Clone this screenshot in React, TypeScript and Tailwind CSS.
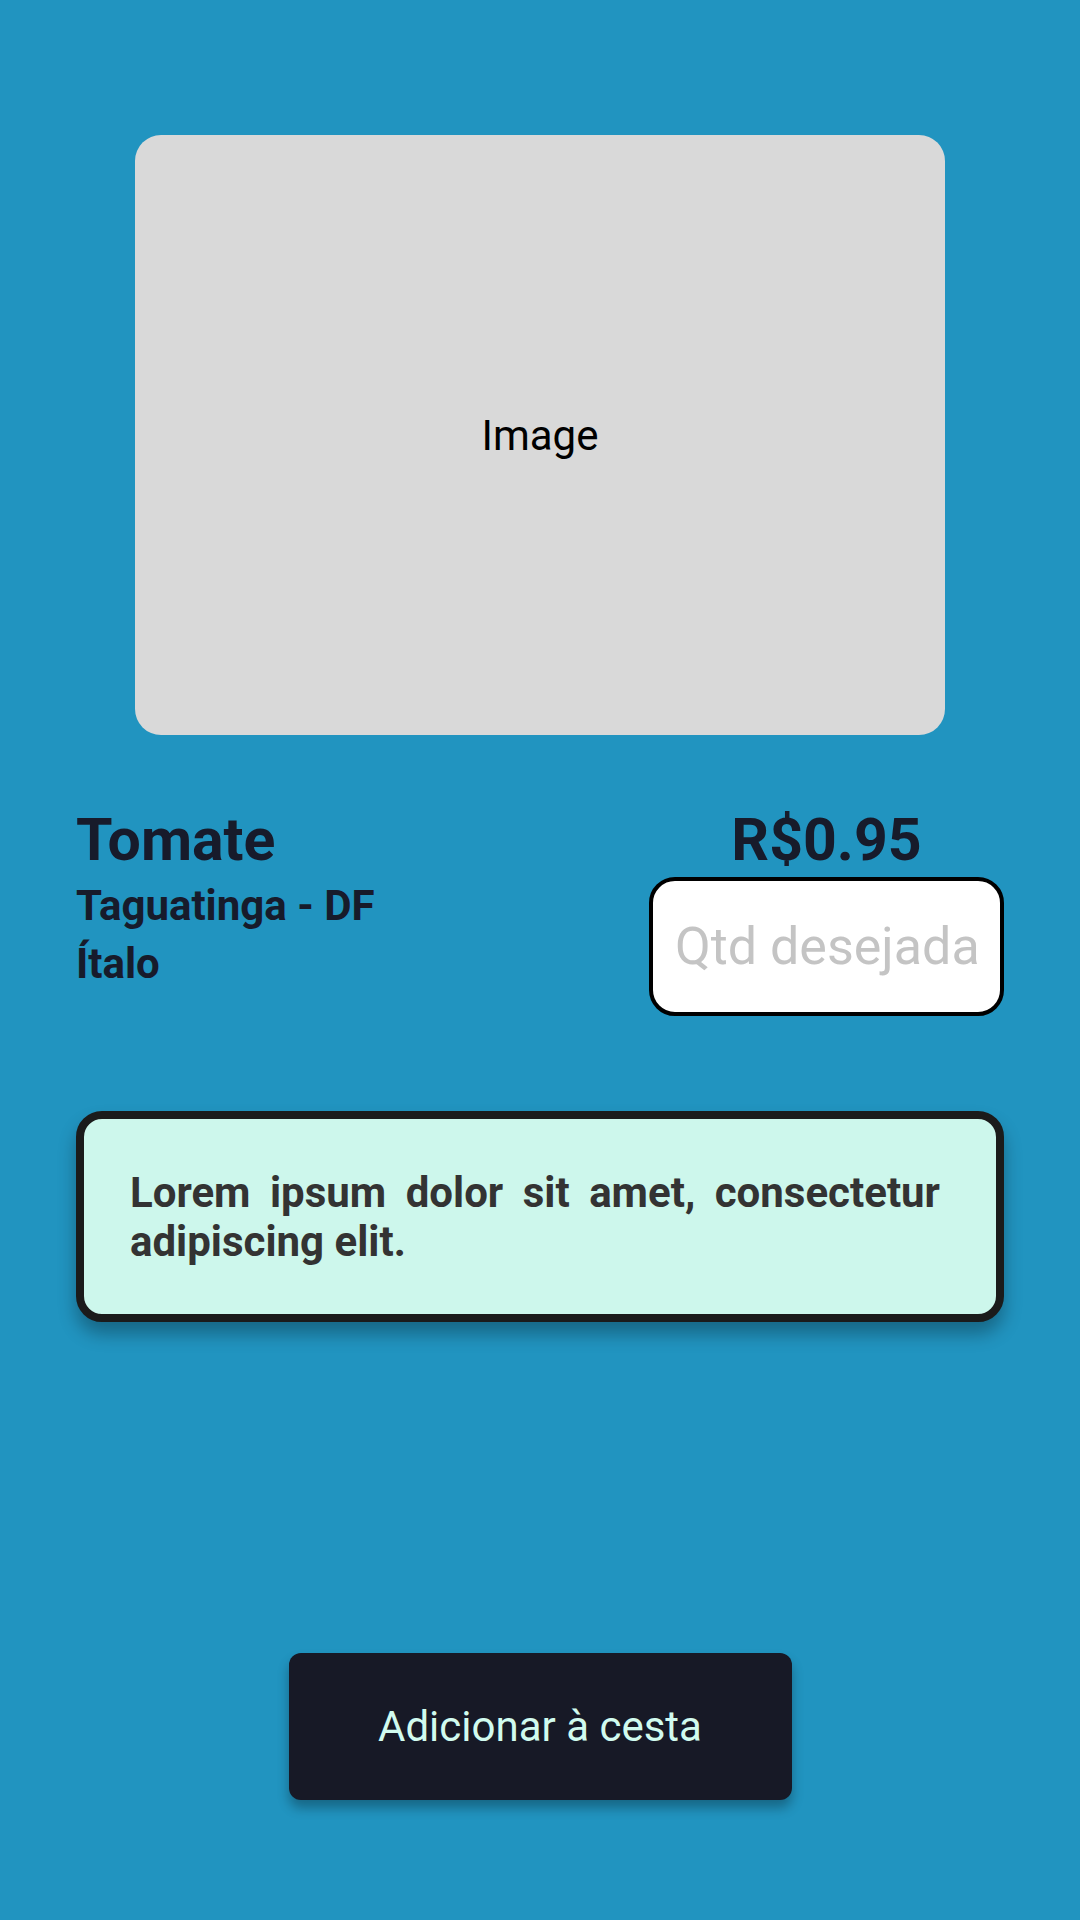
import React, { useState } from "react";

export default function App() {
  const [qtd, setQtd] = useState("");

  return (
    <div className="min-h-[1920px] w-[1080px] bg-[#2194c0] px-[76px] flex flex-col font-['Roboto',sans-serif]">
      <div className="mt-[135px] mx-auto w-[810px] h-[600px] rounded-[26px] bg-[#d9d9d9] flex items-center justify-center">
        <span className="text-[42px] text-black">Image</span>
      </div>

      <div className="mt-[71px] flex justify-between items-start">
        <div className="text-[#171b2b] font-bold">
          <h1 className="text-[59px] leading-[68px]">Tomate</h1>
          <p className="mt-1 text-[42px] leading-[56px]">Taguatinga - DF</p>
          <p className="mt-[2px] text-[42px] leading-[56px]">Ítalo</p>
        </div>
        <div className="w-[355px] flex flex-col items-center">
          <div className="text-[59px] leading-[68px] font-bold text-[#171b2b]">R$0.95</div>
          <input
            value={qtd}
            onChange={(e) => setQtd(e.target.value)}
            placeholder="Qtd desejada"
            className="mt-[3px] w-[355px] h-[139px] rounded-[26px] border-[4px] border-black bg-white px-[22px] text-[52px] text-[#333] placeholder:text-[#c4c4c4] outline-none"
          />
        </div>
      </div>

      <div className="mt-[95px] h-[211px] rounded-[26px] border-[8px] border-[#1b1b1b] bg-[#cdf7ec] pl-[46px] pr-[56px] flex items-center shadow-[0_12px_18px_rgba(0,0,0,0.3)]">
        <p className="text-[42px] leading-[49px] font-bold text-[#333333] text-justify">
          Lorem ipsum dolor sit amet, consectetur adipiscing elit.
        </p>
      </div>

      <button className="mt-[331px] mx-auto w-[503px] h-[147px] rounded-[12px] bg-[#171926] text-[42px] text-[#d1fbef] shadow-[0_8px_12px_rgba(0,0,0,0.3)]">
        Adicionar à cesta
      </button>
    </div>
  );
}
